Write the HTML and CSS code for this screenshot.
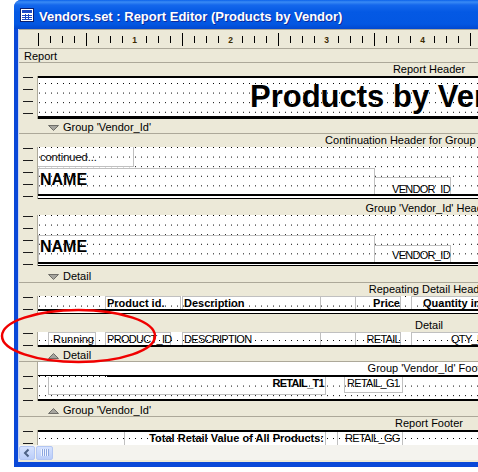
FILE: index.html
```html
<!DOCTYPE html>
<html>
<head>
<meta charset="utf-8">
<title>Vendors.set : Report Editor</title>
<link rel="stylesheet" href="styles.css">
</head>
<body>
<div class="win">
  <div class="titlebar">
    <svg class="appicon" width="14" height="14" viewBox="0 0 14 14">
      <rect x="0.5" y="0.5" width="13" height="13" fill="#fff" stroke="#0b1f6e"/>
      <rect x="2" y="2" width="10" height="3" fill="#1b48c4"/>
      <path d="M2 7.5h10M2 9.5h10M2 11.5h10M5.5 6v6M8.5 6v6" stroke="#1b48c4" stroke-width="1"/>
    </svg>
    <span class="title">Vendors.set : Report Editor (Products by Vendor)</span>
  </div>
  <div class="client">
    <div class="ruler">
      <div class="corner"></div>
      <div class="ticks">
        <i class="t big"></i><i class="t"></i><i class="t"></i><i class="t"></i>
        <i class="t big"></i><i class="t"></i><i class="t"></i><i class="t"></i>
        <i class="t num"><span>1</span></i><i class="t"></i><i class="t"></i><i class="t"></i>
        <i class="t big"></i><i class="t"></i><i class="t"></i><i class="t"></i>
        <i class="t num"><span>2</span></i><i class="t"></i><i class="t"></i><i class="t"></i>
        <i class="t big"></i><i class="t"></i><i class="t"></i><i class="t"></i>
        <i class="t num"><span>3</span></i><i class="t"></i><i class="t"></i><i class="t"></i>
        <i class="t big"></i><i class="t"></i><i class="t"></i><i class="t"></i>
        <i class="t num"><span>4</span></i><i class="t"></i><i class="t"></i><i class="t"></i>
        <i class="t big"></i><i class="t"></i><i class="t"></i><i class="t"></i>
      </div>
    </div>

    <div class="designer">
      <div class="band grp rep"><span>Report</span></div>
      <div class="band lbl"><span class="cap">Report Header</span></div>
      <div class="sec">
        <div class="gut"></div>
        <div class="cv cv-rh"><span class="bigtitle">Products by Vendor</span></div>
      </div>

      <div class="band grp">
        <svg class="tri" width="11" height="6" viewBox="0 0 11 6"><path d="M0.5 0.5h10l-5 5z" fill="#a6a59e" stroke="#6f6e68"/></svg>
        <span>Group 'Vendor_Id'</span>
      </div>
      <div class="band lbl"><span class="cap">Continuation Header for Group 'Vendor_Id'</span></div>
      <div class="sec">
        <div class="gut"></div>
        <div class="cv cv-cont">
          <div class="fld f-cont">continued...</div>
          <div class="fld f-name">NAME</div>
          <div class="fld f-vid caps">VENDOR_ID</div>
          <div class="hline hl-2"></div>
        </div>
      </div>

      <div class="band lbl h16"><span class="cap">Group 'Vendor_Id' Header</span></div>
      <div class="sec">
        <div class="gut"></div>
        <div class="cv cv-gh">
          <div class="fld f-name gh">NAME</div>
          <div class="fld f-vid gh caps">VENDOR_ID</div>
          <div class="hline hl-1"></div>
        </div>
      </div>

      <div class="band grp h17">
        <svg class="tri" width="11" height="6" viewBox="0 0 11 6"><path d="M0.5 0.5h10l-5 5z" fill="#a6a59e" stroke="#6f6e68"/></svg>
        <span>Detail</span>
      </div>
      <div class="band lbl"><span class="cap">Repeating Detail Header</span></div>
      <div class="sec">
        <div class="gut"></div>
        <div class="cv cv-rdh">
          <div class="fld cell c1 b">Product id.</div>
          <div class="fld cell c2 b">Description</div>
          <div class="fld cell c3"></div>
          <div class="fld cell c4 b">Price</div>
          <div class="fld cell c5 b">Quantity in Stock</div>
          <div class="hline hl-2"></div>
        </div>
      </div>

      <div class="band lbl h18"><span class="cap">Detail</span></div>
      <div class="sec">
        <div class="gut"></div>
        <div class="cv cv-det">
          <div class="fld cell c0">Running</div>
          <div class="fld cell c1n caps">PRODUCT_ID</div>
          <div class="fld cell c2 caps">DESCRIPTION</div>
          <div class="fld cell c3"></div>
          <div class="fld cell c4 caps">RETAIL</div>
          <div class="fld cell c5q caps">QTY_IN_STOCK</div>
        </div>
      </div>

      <div class="band grp">
        <svg class="tri" width="11" height="6" viewBox="0 0 11 6"><path d="M0.5 5.5h10l-5 -5z" fill="#a6a59e" stroke="#6f6e68"/></svg>
        <span>Detail</span>
      </div>
      <div class="band lbl white"><span class="cap">Group 'Vendor_Id' Footer</span></div>
      <div class="sec">
        <div class="gut"></div>
        <div class="cv cv-gf">
          <div class="g-line"></div>
          <div class="fld g1 b caps">RETAIL_T1</div>
          <div class="fld g2 caps">RETAIL_G1</div>
        </div>
      </div>

      <div class="band grp h16">
        <svg class="tri" width="11" height="6" viewBox="0 0 11 6"><path d="M0.5 5.5h10l-5 -5z" fill="#a6a59e" stroke="#6f6e68"/></svg>
        <span>Group 'Vendor_Id'</span>
      </div>
      <div class="band lbl"><span class="cap">Report Footer</span></div>
      <div class="sec">
        <div class="gut"></div>
        <div class="cv cv-rf">
          <div class="fld q1 b">Total Retail Value of All Products:</div>
          <div class="fld q2 caps">RETAIL_GG</div>
        </div>
      </div>
    </div>

    <div class="hscroll">
      <div class="sb-btn">
        <svg width="12" height="12" viewBox="0 0 12 12"><path d="M7.5 2.5L4 6l3.5 3.5" fill="none" stroke="#4d6185" stroke-width="2"/></svg>
      </div>
      <div class="sb-thumb"><span class="grip"></span></div>
    </div>
    <div class="client-foot"></div>
  </div>
</div>

<svg class="annot" width="478" height="472" viewBox="0 0 478 472">
  <ellipse cx="78.5" cy="336" rx="76.5" ry="26" fill="none" stroke="#f00000" stroke-width="2.5"/>
</svg>
</body>
</html>
```

FILE: styles.css
```css
html, body {
  margin: 0;
  padding: 0;
  background: #fff;
  overflow: hidden;
}

body {
  position: relative;
  width: 478px;
  height: 472px;
  font-family: "Liberation Sans", Arial, sans-serif;
  font-size: 11px;
  color: #000;
}

/* ---------- window frame ---------- */
.win {
  margin-left: 14px;
  width: 620px;
  height: 467px;
  box-sizing: border-box;
  padding: 0 4px 5px 4px;
  background: #0a48d8;
  border-radius: 7px 7px 0 0;
  display: flex;
  flex-direction: column;
}

.titlebar {
  height: 29px;
  flex: none;
  margin: 0 -4px;
  padding-left: 6px;
  box-sizing: border-box;
  display: flex;
  align-items: flex-start;
  gap: 5px;
  border-radius: 7px 7px 0 0;
  background: linear-gradient(to bottom, #0b61ea 0, #3a8bf5 2px, #1467ec 5px, #0459e4 12px, #0357e2 24px, #0148d0 29px);
}

.appicon {
  margin-top: 8px;
  flex: none;
}

.title {
  margin-top: 9px;
  font: bold 13px/15px "Liberation Sans", Arial, sans-serif;
  color: #fff;
  white-space: nowrap;
  text-shadow: 1px 1px 0 #0d2a9c;
}

.client {
  flex: 1;
  display: flex;
  flex-direction: column;
  background: #ece9d8;
  border-left: 1px solid #c9d6f3;
  overflow: hidden;
}

/* ---------- ruler ---------- */
.ruler {
  height: 20px;
  flex: none;
  box-sizing: border-box;
  border-top: 1px solid #aca899;
  border-bottom: 1px solid #aca899;
  display: flex;
}

.corner {
  width: 19px;
  flex: none;
}

.ticks {
  display: flex;
}

.t {
  width: 12px;
  height: 18px;
  flex: none;
  position: relative;
  font-style: normal;
}

.t::before {
  content: "";
  position: absolute;
  left: 0;
  top: 6px;
  width: 1px;
  height: 7px;
  background: #000;
}

.t.big::before {
  top: 3px;
  height: 13px;
}

.t.num::before {
  display: none;
}

.t.num span {
  display: block;
  width: 12px;
  margin-left: -5.5px;
  padding-top: 1px;
  text-align: center;
  font: bold 8.5px/18px "Liberation Sans", Arial, sans-serif;
  color: #3b2a00;
}

/* ---------- designer ---------- */
.designer {
  height: 396px;
  flex: none;
  overflow: hidden;
}

.band {
  display: flex;
  align-items: flex-end;
  background: #ece9d8;
  white-space: nowrap;
  line-height: 12px;
  box-sizing: border-box;
}

.grp {
  height: 15px;
  border-bottom: 1px solid #aca899;
  padding-left: 29px;
  gap: 4px;
}

.grp.rep {
  height: 14px;
  padding-left: 5px;
}

.tri {
  flex: none;
  margin-bottom: 2px;
}

.lbl {
  height: 13px;
  padding-bottom: 1px;
}

.lbl .cap {
  margin-left: 361px;
  width: 98px;
  flex: none;
  display: flex;
  justify-content: center;
}

.lbl.white {
  background: linear-gradient(to right, #ece9d8 18px, #aca899 18px 19px, #fff 19px);
}

.h16 { height: 16px; }
.h17 { height: 17px; }
.h18 { height: 18px; }

.sec {
  display: flex;
}

.gut {
  width: 19px;
  flex: none;
  box-sizing: border-box;
  border-right: 1px solid #aca899;
  background:
    repeating-linear-gradient(to bottom, #1c1c1c 0 1px, transparent 1px 12px) 4px 1px / 10px 100% no-repeat,
    #ece9d8;
}

.cv {
  flex: 1;
  position: relative;
  background-color: #fff;
  background-image: conic-gradient(from 270deg at 1px 1px, #000 90deg, transparent 0);
  background-size: 6px 9.6px;
  background-position: 1px 0;
}

.cv-rh {
  height: 38px;
  border-top: 2px solid #000;
  border-bottom: 3px solid #000;
  background-position: 1px 5px;
}

.cv-cont {
  height: 51px;
  border-bottom: 1px solid #000;
}

.cv-gh {
  height: 50px;
  border-bottom: 1px solid #000;
}

.cv-rdh {
  height: 17px;
  border-bottom: 1px solid #000;
}

.cv-det {
  height: 13px;
  border-bottom: 2px solid #000;
  background-position: 1px 8px;
}

.cv-gf {
  height: 23px;
  border-top: 1px solid #000;
  border-bottom: 2px solid #000;
}

.cv-rf {
  height: 40px;
  border-top: 2px solid #000;
  background-position: 1px 6px;
}

.bigtitle {
  position: absolute;
  left: 212px;
  top: 3px;
  font: bold 31px/31px "Liberation Sans", Arial, sans-serif;
  white-space: nowrap;
}

.hline {
  position: absolute;
  left: 0;
  right: 0;
  height: 2px;
  background: #000;
}

.hl-2 { bottom: 2px; }
.hl-1 { bottom: 1px; }

/* ---------- fields ---------- */
.fld {
  position: absolute;
  box-sizing: border-box;
  border: 0 solid #c0c0c0;
  white-space: nowrap;
  font-size: 11px;
  line-height: 13px;
  overflow: visible;
}

.b { font-weight: bold; }
.caps { letter-spacing: -0.7px; }

.f-cont {
  left: 0;
  top: 0;
  width: 96px;
  height: 20px;
  border-right-width: 1px;
  border-bottom-width: 1px;
  padding: 4px 0 0 2px;
}

.f-name {
  left: 0;
  top: 21px;
  width: 337px;
  height: 26px;
  border-width: 1px 1px 0 1px;
  padding: 2px 0 0 1px;
  font: bold 16px/18px "Liberation Sans", Arial, sans-serif;
}

.f-name.gh {
  top: 20px;
  height: 27px;
}

.f-vid {
  left: 336px;
  top: 30px;
  width: 77px;
  height: 17px;
  border-width: 1px 1px 0 0;
  padding: 5px 0 0 18px;
}

.f-vid.gh {
  padding-top: 3px;
}

.cell {
  top: 0;
  height: 13px;
  border-width: 1px 1px 0 1px;
  line-height: 12px;
}

.c0 { left: 10px; width: 48px; text-align: right; padding-right: 1px; }
.c1 { left: 67px; width: 76px; padding-left: 1px; }
.c1n { left: 67px; width: 66px; padding-left: 1px; }
.c2 { left: 144px; width: 139px; padding-left: 1px; }
.c3 { left: 283px; width: 35px; border-left-width: 0; }
.c4 { left: 318px; width: 45px; border-left-width: 0; text-align: right; }
.c5 { left: 373px; width: 220px; padding-left: 11px; }
.c5q { left: 373px; width: 220px; padding-left: 39px; }

.g-line {
  position: absolute;
  left: 69px;
  right: 0;
  top: 0;
  height: 1px;
  background: #000;
}

.g1 {
  left: 10px;
  top: 1px;
  width: 278px;
  height: 18px;
  border-width: 0 1px 1px 1px;
  text-align: right;
  padding-right: 1px;
  line-height: 12px;
}

.g2 {
  left: 306px;
  top: 1px;
  width: 59px;
  height: 16px;
  border-width: 0 1px 1px 1px;
  padding-left: 2px;
  line-height: 12px;
}

.q1 {
  left: 86px;
  top: 0;
  width: 202px;
  height: 30px;
  border-width: 0 1px;
  text-align: right;
  padding-right: 1px;
  line-height: 12px;
}

.q2 {
  left: 299px;
  top: 0;
  width: 66px;
  height: 30px;
  border-width: 0 1px;
  padding-left: 7px;
  line-height: 12px;
}

/* ---------- scrollbar ---------- */
.hscroll {
  height: 15px;
  flex: none;
  display: flex;
  align-items: center;
  gap: 1px;
  background: #f4f3ee;
}

.sb-btn,
.sb-thumb {
  height: 14px;
  box-sizing: border-box;
  border: 1px solid #b3c6f2;
  border-radius: 2px;
  background: linear-gradient(to bottom, #d6e2fe, #bacdf9);
  display: flex;
  align-items: center;
  justify-content: center;
  flex: none;
}

.sb-btn { width: 16px; }
.sb-thumb { width: 17px; }

.grip {
  width: 8px;
  height: 7px;
  background: repeating-linear-gradient(to right, #f1f5ff 0 1px, #8ca6e0 1px 2px);
}

.client-foot {
  height: 2px;
  flex: none;
  background: #ece9d8;
}

/* ---------- annotation ---------- */
.annot {
  position: absolute;
  left: 0;
  top: 0;
  pointer-events: none;
}
```
